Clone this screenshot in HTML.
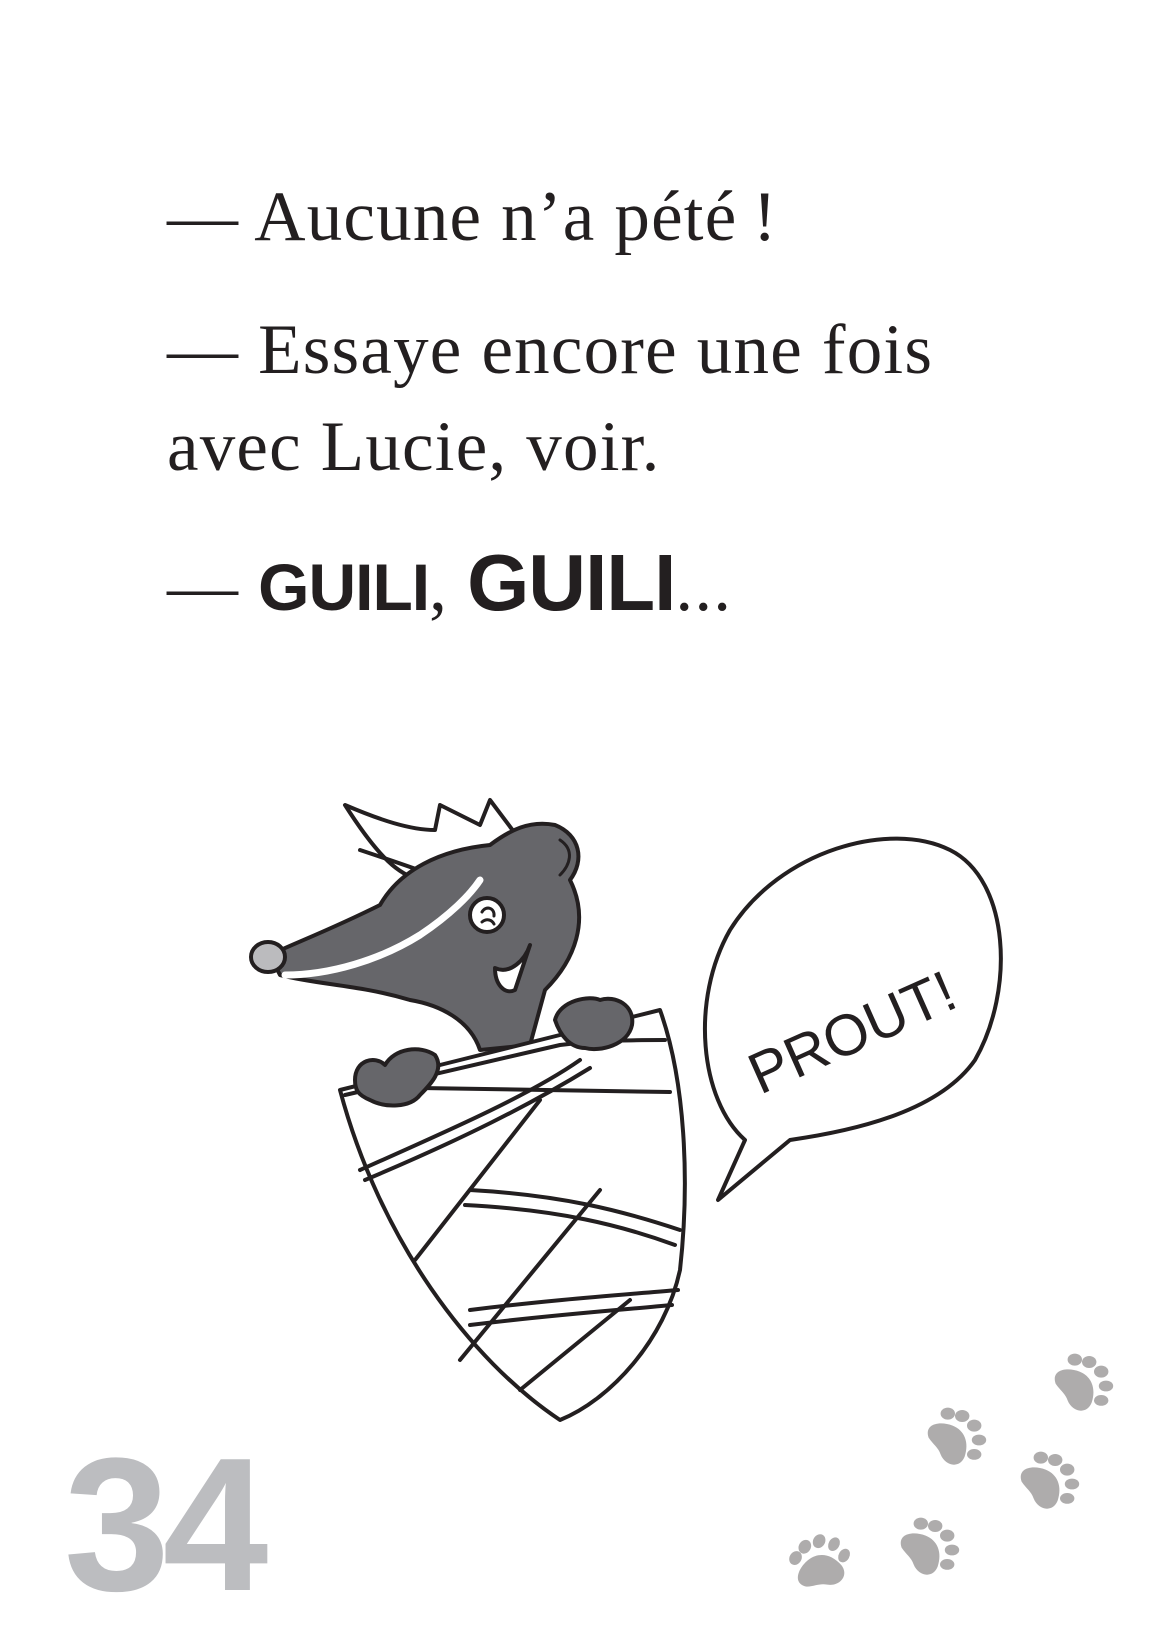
<!DOCTYPE html>
<html><head><meta charset="utf-8">
<style>
html,body{margin:0;padding:0;background:#fff;}
body{width:1154px;height:1601px;position:relative;overflow:hidden;}
.t{position:absolute;left:167px;font-family:"Liberation Serif",serif;font-size:71px;color:#231f20;white-space:nowrap;line-height:1;letter-spacing:1.2px;}
.g{font-family:"Liberation Sans",sans-serif;font-weight:bold;letter-spacing:-1px;}
.num{position:absolute;left:64px;top:1430px;font-family:"Liberation Sans",sans-serif;font-weight:bold;font-size:190px;color:#bcbdc0;letter-spacing:-7px;line-height:1;}
</style></head><body>
<div class="t" style="top:182px">— Aucune n’a pété&#8201;!</div>
<div class="t" style="top:315px">— Essaye encore une fois</div>
<div class="t" style="top:412px">avec Lucie, voir.</div>
<div class="t" style="top:543px">— <span class="g" style="font-size:66px">GUILI</span>, <span class="g" style="font-size:80px">GUILI</span>...</div>

<svg width="1154" height="1601" style="position:absolute;left:0;top:0" xmlns="http://www.w3.org/2000/svg">
<defs>
<g id="paw" fill="#aeacac">
<path d="M-22,-2 C-26,-14 -12,-16 -2,-12 C8,-8 12,2 8,14 C4,24 -8,22 -12,12 C-14,6 -18,4 -22,-2Z"/>
<ellipse cx="-6" cy="-22" rx="6" ry="5"/>
<ellipse cx="6" cy="-20" rx="6" ry="5"/>
<ellipse cx="16" cy="-12" rx="6" ry="5"/>
<ellipse cx="20" cy="0" rx="6" ry="4.5"/>
<ellipse cx="16" cy="12" rx="6" ry="4.5"/>
</g>
</defs>
<use href="#paw" transform="translate(955,1440) scale(1.2)"/>
<use href="#paw" transform="translate(1082,1386) scale(1.2)"/>
<use href="#paw" transform="translate(1048,1484) scale(1.2)"/>
<use href="#paw" transform="translate(928,1550) scale(1.2)"/>
<use href="#paw" transform="translate(822,1565) rotate(-60) scale(1.2)"/>

<g stroke="#231f20" stroke-width="4" fill="none" stroke-linecap="round" stroke-linejoin="round">
<path d="M345,805 C380,820 410,830 435,830 L440,805 L480,825 L490,800 L520,840 L470,870 L420,880 C400,875 380,860 345,805Z" fill="#fff"/>
<path d="M360,850 C390,860 420,870 440,878"/>
<path d="M270,955 C290,945 330,930 380,905 C400,870 440,850 490,845 C510,830 530,820 555,825 C580,835 585,860 570,880 C590,920 575,960 545,990 L530,1045 L480,1050 C470,1020 440,1005 410,1000 C360,985 320,985 280,975 Z" fill="#66666a"/>
<path d="M285,975 C330,975 380,960 420,935 C450,915 470,895 480,880" stroke="#fff" stroke-width="7"/>
<ellipse cx="268" cy="957" rx="17" ry="15" fill="#bbbbbe"/>
<circle cx="487" cy="915" r="17" fill="#fff"/>
<path d="M482,912 C486,905 495,908 494,916 M482,922 C487,918 492,920 494,924" stroke-width="3"/>
<path d="M495,968 C510,975 525,960 530,945 L515,990 C505,995 495,985 495,968Z" fill="#fff"/>
<path d="M560,840 C575,850 570,865 560,875" stroke-width="3"/>
<path d="M340,1090 L660,1010 C685,1080 690,1180 680,1270 C665,1340 610,1400 560,1420 C470,1360 380,1240 340,1090Z" fill="#fff"/>
<path d="M345,1095 L560,1045 C600,1040 640,1040 665,1040"/>
<path d="M420,1088 L670,1092"/>
<path d="M360,1170 C450,1130 530,1095 580,1060"/>
<path d="M365,1180 C460,1140 530,1105 590,1068"/>
<path d="M470,1190 C560,1195 620,1210 680,1230"/>
<path d="M465,1205 C560,1210 620,1225 675,1245"/>
<path d="M415,1260 L540,1100"/>
<path d="M470,1310 C550,1300 620,1295 678,1290"/>
<path d="M470,1325 C550,1315 620,1310 672,1305"/>
<path d="M460,1360 L600,1190"/>
<path d="M520,1390 L630,1300"/>
<path d="M355,1080 C355,1060 375,1055 385,1065 C395,1048 420,1045 435,1055 C445,1070 430,1085 420,1095 C410,1108 385,1108 370,1100 C358,1095 355,1090 355,1080Z" fill="#66666a"/>
<path d="M555,1020 C560,1000 590,995 600,1000 C615,995 635,1005 632,1025 C628,1045 600,1052 585,1048 C570,1048 560,1035 555,1020Z" fill="#66666a"/>
<path d="M745,1140 C700,1100 690,1000 730,930 C780,850 890,820 950,850 C1010,880 1015,990 975,1060 C940,1110 860,1130 790,1140 L718,1200 Z" fill="#fff"/>
</g>
<text x="0" y="0" transform="translate(760,1095) rotate(-24)" font-family="Liberation Sans,sans-serif" font-size="58" fill="#231f20">PROUT!</text>
</svg>
<div class="num">34</div>
</body></html>
